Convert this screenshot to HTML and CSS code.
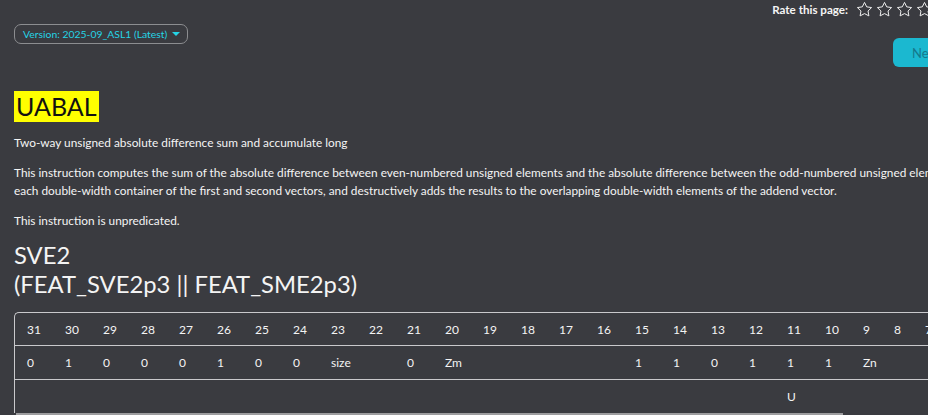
FILE: index.html
```html
<!DOCTYPE html>
<html lang="en">
<head>
<meta charset="utf-8">
<title>UABAL</title>
<link rel="stylesheet" href="styles.css">
</head>
<body>
<div class="page">
  <div class="topbar">
    <div class="rate">
      <span class="rate-label">Rate this page:</span>
      <span class="stars">
        <svg class="star" viewBox="0 0 24 24"><polygon points="12,2 15.09,8.26 22,9.27 17,14.14 18.18,21.02 12,17.77 5.82,21.02 7,14.14 2,9.27 8.91,8.26"/></svg>
        <svg class="star" viewBox="0 0 24 24"><polygon points="12,2 15.09,8.26 22,9.27 17,14.14 18.18,21.02 12,17.77 5.82,21.02 7,14.14 2,9.27 8.91,8.26"/></svg>
        <svg class="star" viewBox="0 0 24 24"><polygon points="12,2 15.09,8.26 22,9.27 17,14.14 18.18,21.02 12,17.77 5.82,21.02 7,14.14 2,9.27 8.91,8.26"/></svg>
        <svg class="star" viewBox="0 0 24 24"><polygon points="12,2 15.09,8.26 22,9.27 17,14.14 18.18,21.02 12,17.77 5.82,21.02 7,14.14 2,9.27 8.91,8.26"/></svg>
        <svg class="star" viewBox="0 0 24 24"><polygon points="12,2 15.09,8.26 22,9.27 17,14.14 18.18,21.02 12,17.77 5.82,21.02 7,14.14 2,9.27 8.91,8.26"/></svg>
      </span>
    </div>
  </div>

  <div class="toolbar">
    <button class="version">Version: 2025-09_ASL1 (Latest)<span class="caret"></span></button>
    <button class="next">Next</button>
  </div>

  <h1 class="title"><span class="hl">UABAL</span></h1>
  <p class="summary">Two-way unsigned absolute difference sum and accumulate long</p>
  <p class="desc">This instruction computes the sum of the absolute difference between even-numbered unsigned elements and the absolute difference between the odd-numbered unsigned elements in<br>each double-width container of the first and second vectors, and destructively adds the results to the overlapping double-width elements of the addend vector.</p>
  <p class="desc">This instruction is unpredicated.</p>

  <h2 class="arch">SVE2<br>(FEAT_SVE2p3 || FEAT_SME2p3)</h2>

  <div class="enc-wrap">
    <table class="enc">
      <colgroup>
        <col class="c2"><col class="c2"><col class="c2"><col class="c2"><col class="c2"><col class="c2"><col class="c2"><col class="c2">
        <col class="c2"><col class="c2"><col class="c2"><col class="c2"><col class="c2"><col class="c2"><col class="c2"><col class="c2">
        <col class="c2"><col class="c2"><col class="c2"><col class="c2"><col class="c2"><col class="c2">
        <col class="c1"><col class="c1"><col class="c1"><col class="c1"><col class="c1"><col class="c1"><col class="c1"><col class="c1"><col class="c1"><col class="c1">
      </colgroup>
      <tr class="bits">
        <td>31</td><td>30</td><td>29</td><td>28</td><td>27</td><td>26</td><td>25</td><td>24</td>
        <td>23</td><td>22</td><td>21</td><td>20</td><td>19</td><td>18</td><td>17</td><td>16</td>
        <td>15</td><td>14</td><td>13</td><td>12</td><td>11</td><td>10</td><td>9</td><td>8</td>
        <td>7</td><td>6</td><td>5</td><td>4</td><td>3</td><td>2</td><td>1</td><td>0</td>
      </tr>
      <tr class="vals">
        <td>0</td><td>1</td><td>0</td><td>0</td><td>0</td><td>1</td><td>0</td><td>0</td>
        <td colspan="2">size</td><td>0</td><td colspan="5">Zm</td>
        <td>1</td><td>1</td><td>0</td><td>1</td><td>1</td><td>1</td><td colspan="5">Zn</td>
        <td colspan="5">Zda</td>
      </tr>
      <tr class="vals">
        <td></td><td></td><td></td><td></td><td></td><td></td><td></td><td></td>
        <td colspan="2"></td><td></td><td colspan="5"></td>
        <td></td><td></td><td></td><td></td><td>U</td><td></td><td colspan="5"></td>
        <td colspan="5"></td>
      </tr>
    </table>
  </div>
  <div class="scroll-thumb"></div>
</div>
</body>
</html>
```

FILE: styles.css
```css
html, body {
  margin: 0;
  padding: 0;
  overflow: hidden;
  background: #3a3b40;
}

body {
  font-family: Lato, "Open Sans", "Liberation Sans", sans-serif;
  color: #f4f4f4;
}

.page {
  width: 960px;
  padding: 0 0 0 14px;
}

/* Top rating bar */
.topbar {
  height: 20px;
  display: flex;
  justify-content: flex-end;
  padding-right: 21px;
}

.rate {
  display: flex;
  align-items: center;
  gap: 8px;
  height: 18px;
}

.rate-label {
  font-size: 11.6px;
  font-weight: 700;
  color: #f4f4f4;
}

.stars {
  display: flex;
  gap: 3px;
}

.star {
  width: 17px;
  height: 17px;
  fill: none;
  stroke: #f0f0f0;
  stroke-width: 1.4;
  stroke-linejoin: round;
}

/* Toolbar: version selector + next */
.toolbar {
  margin-top: 4px;
  display: flex;
  justify-content: space-between;
  align-items: flex-start;
  height: 43px;
  padding-right: 17px;
}

.version {
  height: 20px;
  padding: 0 7px 0 8px;
  border: 1px solid #8c8d90;
  border-radius: 7px;
  background: transparent;
  color: #25d4e6;
  font-family: Lato, "Open Sans", sans-serif;
  font-size: 10.4px;
  display: flex;
  align-items: center;
  gap: 5px;
}

.caret {
  width: 0;
  height: 0;
  border-left: 4px solid transparent;
  border-right: 4px solid transparent;
  border-top: 4px solid #25d4e6;
}

.next {
  margin-top: 14px;
  height: 29px;
  width: 64px;
  padding: 0 0 0 19px;
  text-align: left;
  border: none;
  border-radius: 6px;
  background: #1bb8d0;
  color: #15798c;
  font-family: Lato, "Open Sans", sans-serif;
  font-size: 13px;
}

/* Title */
.title {
  margin: 24px 0 0;
  font-size: 25px;
  font-weight: 400;
  line-height: 31px;
  height: 31px;
}

.hl {
  display: inline-block;
  background: #ffff00;
  color: #111;
  padding: 0 2px;
  line-height: 31px;
}

.summary {
  margin: 12px 0 0;
  font-size: 11.85px;
  line-height: 18px;
}

.desc {
  margin: 12px 0 0;
  font-size: 11.85px;
  line-height: 18px;
  white-space: nowrap;
}

.arch {
  margin: 11px 0 0;
  font-size: 23.8px;
  font-weight: 400;
  line-height: 29px;
}

/* Encoding table */
.enc-wrap {
  margin-top: 13px;
  border-top: 1px solid #c9c9cc;
  border-left: 1px solid #c9c9cc;
  border-top-left-radius: 5px;
}

.enc {
  table-layout: fixed;
  width: 1146px;
  border-collapse: separate;
  border-spacing: 0;
  font-size: 12px;
}

.c2 { width: 38px; }
.c1 { width: 31px; }

.enc td {
  padding: 0 0 0 12px;
  text-align: left;
  white-space: nowrap;
  color: #f4f4f4;
}

.bits td {
  height: 32px;
}

.vals td {
  height: 33px;
  border-top: 1px solid #c9c9cc;
}

.scroll-thumb {
  margin-left: 2px;
  width: 827px;
  height: 8px;
  background: #9d9d9f;
}
```
